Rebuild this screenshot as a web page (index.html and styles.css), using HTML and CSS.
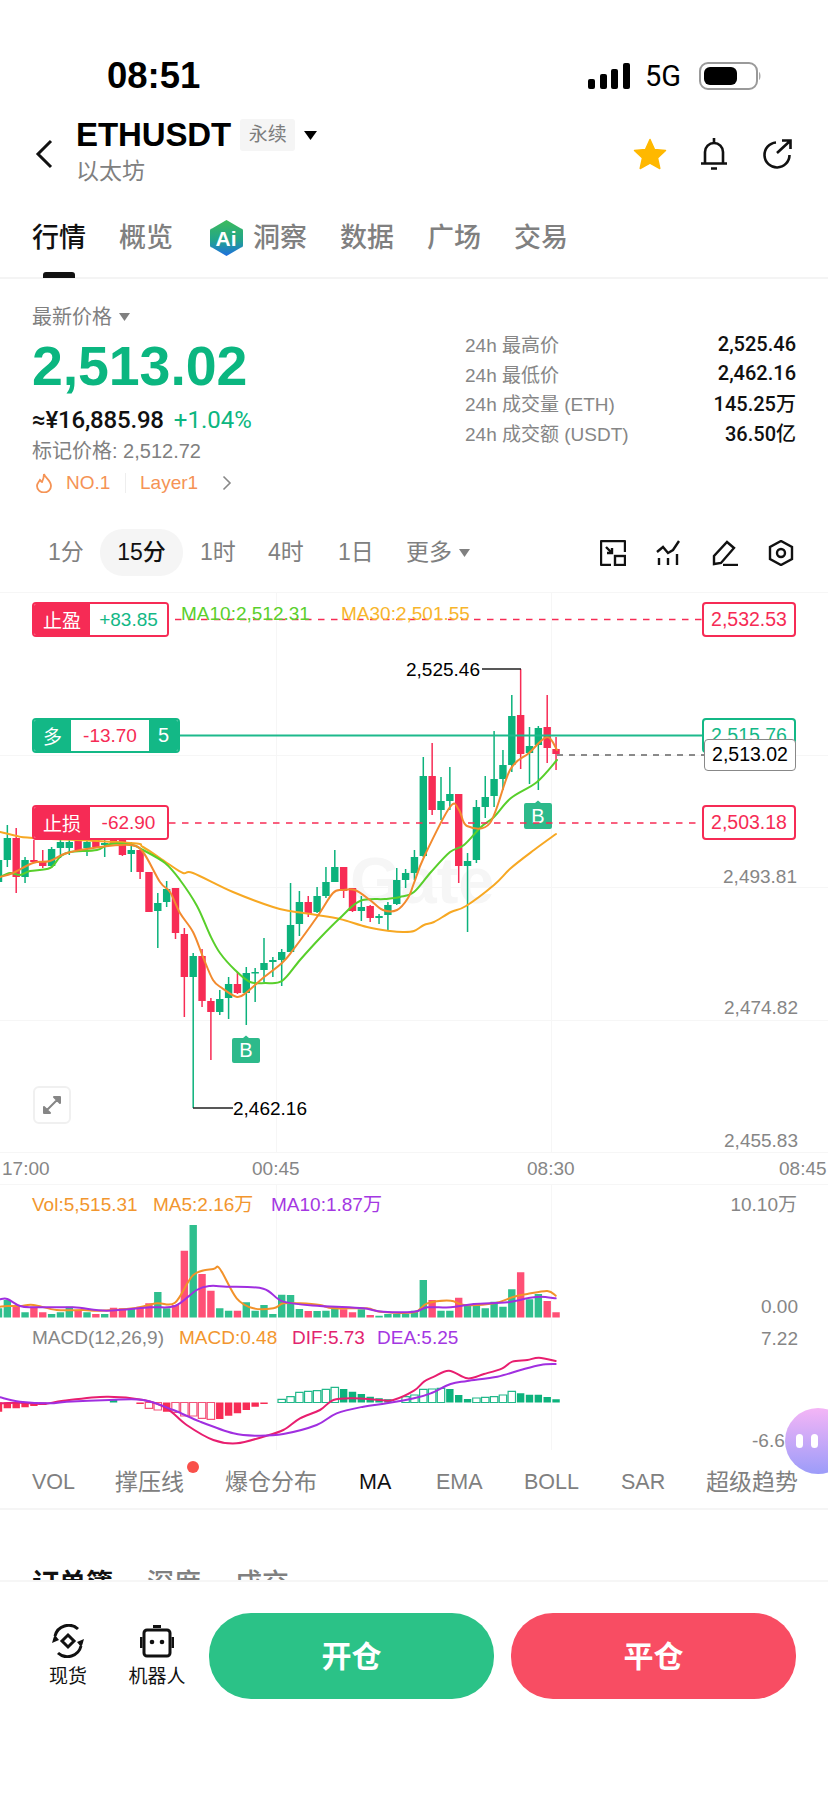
FILE: index.html
```html
<!DOCTYPE html>
<html lang="zh-CN">
<head>
<meta charset="utf-8">
<title>ETHUSDT</title>
<link rel="stylesheet" href="styles.css">
</head>
<body>
<main class="page">
  <div class="status">
    <span class="time">08:51</span>
    <div class="status-right">
      <svg class="signal" viewBox="0 0 42 26"><rect x="0" y="16" width="7" height="10" rx="2"/><rect x="12" y="11" width="7" height="15" rx="2"/><rect x="23" y="6" width="7" height="20" rx="2"/><rect x="35" y="0" width="7" height="26" rx="2"/></svg>
      <span class="net">5G</span>
      <svg class="battery" viewBox="0 0 62 28"><rect x="1" y="1" width="57" height="26" rx="8" fill="#fff" stroke="#9a9a9a" stroke-width="2"/><rect x="5" y="5" width="33" height="18" rx="6" fill="#000"/><path d="M60 10c2 1 2 7 0 8z" fill="#aaa"/></svg>
    </div>
  </div>

  <header class="head">
    <svg class="back" viewBox="0 0 20 30"><path d="M17 2 4 15l13 13" fill="none" stroke="#111" stroke-width="3"/></svg>
    <div class="title-col">
      <div class="title-row">
        <span class="symbol">ETHUSDT</span>
        <span class="badge">永续</span>
        <svg class="caret" viewBox="0 0 13 9"><path d="M0 0h13L6.500 9z"/></svg>
      </div>
      <div class="subname">以太坊</div>
    </div>
    <div class="head-icons">
      <svg class="ic-star" viewBox="0 0 34 32"><path d="M17 1.500 21.500 11.500 32.500 12.500 24.500 20 26.800 30.500 17 25.200 7.200 30.500 9.500 20 1.500 12.500 12.500 11.500z" fill="#FFB800" stroke="#FFB800" stroke-width="1.500" stroke-linejoin="round"/></svg>
      <svg class="ic-bell" viewBox="0 0 28 34"><path d="M1 26.500h26M5 26.500V15a9 9 0 0 1 18 0v11.500" fill="none" stroke="#111" stroke-width="2.600"/><path d="M14 1v5M11 31.500h6" stroke="#111" stroke-width="2.600" fill="none"/></svg>
      <svg class="ic-share" viewBox="0 0 30 30"><path d="M14 3.500A12.500 12.500 0 1 0 27.500 16" fill="none" stroke="#111" stroke-width="2.600"/><path d="M15 14 28 2M20 1.500h8.500V10" fill="none" stroke="#111" stroke-width="2.600"/></svg>
    </div>
  </header>

  <nav class="tabs">
    <span class="tab tab-on">行情</span>
    <span class="tab">概览</span>
    <span class="tab tab-ai">
      <svg class="ai" viewBox="0 0 33 36"><defs><linearGradient id="aig" x1="0" y1="0" x2="0" y2="1"><stop offset="0" stop-color="#3DBB5B"/><stop offset=".55" stop-color="#22A58A"/><stop offset="1" stop-color="#1F6FE0"/></linearGradient></defs><path d="M16.500 0 31 8.500a2 2 0 0 1 2 2v15a2 2 0 0 1-2 2L16.500 36 2 27.500a2 2 0 0 1-2-2v-15a2 2 0 0 1 2-2z" fill="url(#aig)"/><text x="16" y="26" class="ai-text">Ai</text></svg>
      洞察
    </span>
    <span class="tab">数据</span>
    <span class="tab">广场</span>
    <span class="tab">交易</span>
  </nav>

  <section class="summary">
    <div class="sum-left">
      <div class="last-label">最新价格<svg class="caret-s" viewBox="0 0 11 8"><path d="M0 0h11L5.500 8z"/></svg></div>
      <div class="last-price">2,513.02</div>
      <div class="fiat-row"><span class="fiat">≈¥16,885.98</span><span class="pct">+1.04%</span></div>
      <div class="mark">标记价格: 2,512.72</div>
      <div class="rank">
        <svg class="flame" viewBox="0 0 18 20"><path d="M9 1c1 4 7 6 7 12a7 6.500 0 0 1-14 0c0-3 2-4 3-6 1 1 1 2 2 2 1-2 2-5 2-8z" fill="none" stroke="#F59355" stroke-width="1.800"/></svg>
        <span class="rank-no">NO.1</span>
        <span class="rank-sep"></span>
        <span class="rank-cat">Layer1</span>
        <svg class="rank-go" viewBox="0 0 10 16"><path d="M1.500 1.500 8 8l-6.500 6.500" fill="none" stroke="#888" stroke-width="1.600"/></svg>
      </div>
    </div>
    <dl class="stats">
      <div class="stat"><dt>24h 最高价</dt><dd>2,525.46</dd></div>
      <div class="stat"><dt>24h 最低价</dt><dd>2,462.16</dd></div>
      <div class="stat"><dt>24h 成交量 (ETH)</dt><dd>145.25万</dd></div>
      <div class="stat"><dt>24h 成交额 (USDT)</dt><dd>36.50亿</dd></div>
    </dl>
  </section>

  <div class="frames">
    <span class="frame f1">1分</span>
    <span class="frame frame-on">15分</span>
    <span class="frame f2">1时</span>
    <span class="frame f3">4时</span>
    <span class="frame f4">1日</span>
    <span class="frame f5">更多<svg class="caret-s" viewBox="0 0 11 8"><path d="M0 0h11L5.500 8z"/></svg></span>
    <div class="tools">
      <svg viewBox="0 0 26 26"><path d="M11 25H2a1 1 0 0 1-1-1V2a1 1 0 0 1 1-1h22a1 1 0 0 1 1 1v10" class="ts"/><rect x="15" y="16" width="10" height="9" class="ts"/><path d="M6 7l6 6M12 8v5H7" class="ts"/></svg>
      <svg viewBox="0 0 26 26"><path d="M1 12l6-5 5 6 5-3 6-9" class="ts"/><path d="M3 18v7M12 18v7M21 14v11" class="ts"/></svg>
      <svg viewBox="0 0 26 26"><path d="M2 24V16L15 2l7 6L9 23z" class="ts"/><path d="M11 25h15" class="ts"/></svg>
      <svg viewBox="0 0 26 26"><path d="M13 1 24 7v12l-11 6-11-6V7z" class="ts"/><circle cx="13" cy="13" r="4" class="ts"/></svg>
    </div>
  </div>

  <section class="chart">
    <svg class="chart-svg" viewBox="0 590 828 865">
      <path class="grid" d="M0 592.500H828M0 755.500H828M0 887.500H828M0 1020.500H828M0 1152.500H828M0 1184.500H828M276.500 592V1152M276.500 1184V1450M551.500 592V1152M551.500 1184V1450"/>
      <text class="wm" x="350" y="903">Gate</text>

      <path id="candleWickG" class="c-g-w"/>
      <path id="candleWickR" class="c-r-w"/>
      <path id="candleBodyG" class="c-g"/>
      <path id="candleBodyR" class="c-r"/>
      <path id="ma30" class="l l-ma30"/>
      <path id="ma10" class="l l-ma10"/>
      <path id="ma5" class="l l-ma5"/>

      <path class="hl" d="M482 669H521M193 1108H233"/>
      <text class="ax dark" x="406" y="676">2,525.46</text>
      <text class="ax dark" x="233" y="1115">2,462.16</text>

      <g class="bmark">
        <path d="M526 803h9l3-2.500 3 2.500h9a2 2 0 0 1 2 2v22a2 2 0 0 1-2 2h-24a2 2 0 0 1-2-2v-22a2 2 0 0 1 2-2z"/>
        <text x="538" y="823">B</text>
      </g>
      <g class="bmark">
        <path d="M234 1038h9l3-2.500 3 2.500h9a2 2 0 0 1 2 2v21a2 2 0 0 1-2 2h-24a2 2 0 0 1-2-2v-21a2 2 0 0 1 2-2z"/>
        <text x="246" y="1057">B</text>
      </g>

      <path class="dash-r" d="M175 619.500H702M169 823H702"/>
      <path class="solid-g" d="M180 735.500H702"/>
      <path class="dash-k" d="M557 755H704"/>

      <text class="ax ma10t" x="181" y="620">MA10:2,512.31</text>
      <text class="ax ma30t" x="341" y="620">MA30:2,501.55</text>

      <text class="ax grey end" x="797" y="883">2,493.81</text>
      <text class="ax grey end" x="798" y="1014">2,474.82</text>
      <text class="ax grey end" x="798" y="1147">2,455.83</text>
      <text class="ax grey" x="2" y="1175">17:00</text>
      <text class="ax grey" x="252" y="1175">00:45</text>
      <text class="ax grey" x="527" y="1175">08:30</text>
      <text class="ax grey" x="779" y="1175">08:45</text>

      <text class="ax cjk vol-t" x="32" y="1211">Vol:5,515.31</text>
      <text class="ax cjk vol-t" x="153" y="1211">MA5:2.16万</text>
      <text class="ax cjk pur-t" x="271" y="1211">MA10:1.87万</text>
      <text class="ax grey cjk end" x="797" y="1211">10.10万</text>
      <text class="ax grey end" x="798" y="1313">0.00</text>
      <text class="ax grey end" x="798" y="1345">7.22</text>
      <text class="ax grey" x="32" y="1344">MACD(12,26,9)</text>
      <text class="ax vol-t" x="179" y="1344">MACD:0.48</text>
      <text class="ax dif-t" x="292" y="1344">DIF:5.73</text>
      <text class="ax pur-t" x="377" y="1344">DEA:5.25</text>
      <text class="ax grey" x="752" y="1447">-6.61</text>

      <path id="volG" class="v-g"/>
      <path id="volR" class="v-r"/>
      <path id="volMa5" class="l2 l-vol5"/>
      <path id="volMa10" class="l2 l-vol10"/>

      <path id="macdRF" class="m-rf"/>
      <path id="macdRH" class="m-rh"/>
      <path id="macdGF" class="m-gf"/>
      <path id="macdGH" class="m-gh"/>
      <path id="dif" class="l2 l-dif"/>
      <path id="dea" class="l2 l-dea"/>
    </svg>

    <div class="tag tag-tp"><span class="tag-k">止盈</span><span class="tag-v up">+83.85</span></div>
    <div class="tag tag-pos"><span class="tag-k">多</span><span class="tag-v down">-13.70</span><span class="tag-n">5</span></div>
    <div class="tag tag-sl"><span class="tag-k">止损</span><span class="tag-v down">-62.90</span></div>

    <div class="pt pt-tp">2,532.53</div>
    <div class="pt pt-pos">2,515.76</div>
    <div class="pt pt-last">2,513.02</div>
    <div class="pt pt-sl">2,503.18</div>

    <div class="expand"><svg viewBox="0 0 20 20"><path d="M12 2h6v6zM2 12v6h6zM15 5 5 15" class="exp"/></svg></div>
    <div class="assist"><i></i><i></i></div>
  </section>

  <nav class="inds">
    <span class="ind ind-en i1">VOL</span>
    <span class="ind i2">撑压线<b class="dot"></b></span>
    <span class="ind i3">爆仓分布</span>
    <span class="ind ind-en i4 ind-on">MA</span>
    <span class="ind ind-en i5">EMA</span>
    <span class="ind ind-en i6">BOLL</span>
    <span class="ind ind-en i7">SAR</span>
    <span class="ind i8">超级趋势</span>
  </nav>

  <div class="books">
    <span class="book book-on">订单簿</span>
    <span class="book">深度</span>
    <span class="book">成交</span>
  </div>

  <footer class="foot">
    <div class="shortcut s-spot">
      <svg viewBox="0 0 34 34"><path d="M4 12A14 14 0 0 1 27 5M30 22A14 14 0 0 1 7 29" class="sk"/><path d="M1 19c1-3 1-5 3-8l4 5M33 15c-1 3-1 5-3 8l-4-5" class="sk2"/><path d="M17 11l6 6-6 6-6-6z" class="sk"/></svg>
      <span>现货</span>
    </div>
    <div class="shortcut s-bot">
      <svg viewBox="0 0 34 34"><path d="M13 1h8v3h-8z"/><rect x="4" y="6" width="26" height="26" rx="3" class="sk"/><path d="M1 13v11M33 13v11" class="sk"/><circle cx="12" cy="18" r="2.300"/><circle cx="22" cy="18" r="2.300"/></svg>
      <span>机器人</span>
    </div>
    <button class="cta cta-open">开仓</button>
    <button class="cta cta-close">平仓</button>
  </footer>
</main>
<script src="chart.js"></script>
</body>
</html>
```

FILE: styles.css
```css
* { box-sizing: border-box; }
html, body { margin: 0; padding: 0; background: #fff; }
body { font-family: "Liberation Sans", "Noto Sans CJK SC", sans-serif; color: #111; }
.page { width: 828px; height: 1798px; overflow: hidden; position: relative; background: #fff; }

.status { height: 112px; padding: 56px 68px 16px 107px; display: flex; align-items: center; justify-content: space-between; }
.time { font-size: 36.500px; font-weight: 700; line-height: 40px; color: #000; }
.status-right { display: flex; align-items: center; }
.signal { width: 42px; height: 26px; fill: #000; }
.net { font: 400 29px/32px Roboto, sans-serif; margin-left: 15px; color: #000; width: 54px; }
.battery { width: 62px; height: 28px; margin-right: -1px; }

.head { height: 84px; padding: 0 36px 0 34px; display: flex; align-items: center; position: relative; }
.back { width: 20px; height: 30px; margin-right: 22px; }
.title-col { display: flex; flex-direction: column; align-self: flex-start; }
.title-row { display: flex; align-items: center; height: 46px; }
.symbol { font-size: 33px; font-weight: 700; line-height: 40px; letter-spacing: -.1px; color: #000; }
.badge { margin-left: 9px; width: 55px; height: 32px; background: #f5f5f5; border-radius: 3px; font-size: 19px; line-height: 32px; text-align: center; color: #7d7d7d; }
.caret { width: 13px; height: 9px; margin-left: 9px; fill: #000; }
.subname { font-size: 23px; line-height: 32px; color: #808080; margin-top: -3px; }
.head-icons { margin-left: auto; display: flex; align-items: center; }
.ic-star { width: 34px; height: 32px; }
.ic-bell { width: 28px; height: 34px; margin-left: 33px; }
.ic-share { width: 30px; height: 30px; margin-left: 34px; }

.tabs { height: 83px; padding: 2px 0 0 32px; display: flex; align-items: center; border-bottom: 2px solid #f4f4f4; position: relative; }
.tab { font-size: 27px; line-height: 36px; color: #808080; margin-right: 33px; display: flex; align-items: center; font-weight: 500; }
.tab-on { color: #111; }
.tab-on::after { content: ""; position: absolute; left: 43px; bottom: -1px; width: 32px; height: 6px; border-radius: 3px 3px 0 0; background: #111; }
.tab-ai { margin-left: 4px; }
.ai { width: 33px; height: 36px; margin-right: 10px; }
.ai-text { font: 700 21px "Liberation Sans", sans-serif; fill: #fff; text-anchor: middle; }

.summary { height: 250px; padding: 0 32px; display: flex; justify-content: space-between; }
.sum-left { display: flex; flex-direction: column; padding-top: 25px; }
.last-label { font-size: 20px; line-height: 26px; color: #808080; display: flex; align-items: center; }
.caret-s { width: 11px; height: 8px; margin-left: 7px; fill: #808080; }
.last-price { font-size: 55.500px; font-weight: 700; line-height: 62px; color: #0BB680; margin-top: 5px; letter-spacing: -.1px; }
.fiat-row { display: flex; align-items: center; margin-top: 8px; height: 30px; font: 500 24px/30px Roboto, sans-serif; letter-spacing: -.2px; }
.fiat { color: #111; }
.pct { color: #0BB680; margin-left: 10px; font-weight: 400; letter-spacing: 0; }
.mark { font-size: 20px; line-height: 26px; color: #808080; margin-top: 3px; }
.rank { display: flex; align-items: center; height: 32px; margin-top: 3px; font-size: 19px; color: #F59355; }
.flame { width: 18px; height: 20px; margin: 0 13px 0 3px; }
.rank-no { width: 41px; }
.rank-sep { width: 1px; height: 20px; background: #eee; margin: 0 14px 0 18px; }
.rank-cat { width: 58px; }
.rank-go { width: 10px; height: 16px; margin-left: 24px; }

.stats { margin: 0; padding-top: 50px; width: 331px; }
.stat { display: flex; justify-content: space-between; align-items: center; height: 29.500px; }
.stat dt { font-size: 19px; color: #868686; }
.stat dd { margin: 0; font: 500 20px Roboto, "Noto Sans CJK SC", sans-serif; color: #111; }

.frames { height: 61px; padding-right: 34px; display: flex; align-items: flex-start; position: relative; }
.frame { font-size: 23px; line-height: 47px; height: 47px; color: #808080; display: flex; align-items: center; position: absolute; top: 0; }
.f1 { left: 48px; }
.frame-on { left: 100px; width: 83px; justify-content: center; background: #f5f5f5; border-radius: 23px; color: #111; font-weight: 500; }
.f2 { left: 200px; }
.f3 { left: 268px; }
.f4 { left: 338px; }
.f5 { left: 406px; }
.tools { margin-left: auto; display: flex; gap: 30px; padding-top: 11px; }
.tools svg { width: 26px; height: 26px; }
.ts { fill: none; stroke: #111; stroke-width: 2.400; }

.chart { height: 865px; position: relative; }
.chart-svg { position: absolute; left: 0; top: 0; width: 828px; height: 865px; display: block; }
.grid { stroke: #f6f6f6; stroke-width: 1; fill: none; }
.wm { font-size: 65px; font-weight: 700; fill: #f6f6f6; }
.c-g { fill: #0CB27C; } .c-r { fill: #F72C55; }
.c-g-w { stroke: #0CB27C; stroke-width: 1.500; fill: none; }
.c-r-w { stroke: #F72C55; stroke-width: 1.500; fill: none; }
.l { fill: none; stroke-width: 2; stroke-linejoin: round; stroke-linecap: round; }
.l2 { fill: none; stroke-width: 2; stroke-linejoin: round; stroke-linecap: round; }
.l-ma5 { stroke: #F28A2E; }
.l-ma10 { stroke: #58CF2B; }
.l-ma30 { stroke: #F7A823; }
.l-vol5 { stroke: #F2922A; }
.l-vol10 { stroke: #A02FE0; }
.l-dif { stroke: #E81E6F; }
.l-dea { stroke: #A02FE0; }
.hl { stroke: #222; stroke-width: 1.300; fill: none; }
.ax { font-size: 19px; font-family: "Liberation Sans", "Noto Sans CJK SC", sans-serif; }
.dark { fill: #000; }
.grey { fill: #868686; }
.end { text-anchor: end; }
.ma10t { fill: #5ACF2C; }
.ma30t { fill: #F7B52B; }
.vol-t { fill: #F2962E; }
.pur-t { fill: #A437E2; }
.dif-t { fill: #E2246F; }
.bmark path { fill: #2DBA8B; }
.bmark text { font-size: 20px; fill: #fff; text-anchor: middle; }
.dash-r { stroke: #F72C55; stroke-width: 1.500; stroke-dasharray: 6.500 6.500; fill: none; }
.solid-g { stroke: #1DB98C; stroke-width: 2; fill: none; }
.dash-k { stroke: #666; stroke-width: 1.300; stroke-dasharray: 6 6; fill: none; }
.v-g { fill: #2FBF8E; } .v-r { fill: #FF5076; }
.m-rf { fill: #F72C55; } .m-gf { fill: #0CB27C; }
.m-rh { fill: #fff; stroke: #F4537A; stroke-width: 1.200; }
.m-gh { fill: #fff; stroke: #22B88A; stroke-width: 1.200; }

.tag { position: absolute; left: 32px; height: 35px; border-radius: 4px; background: #fff; display: flex; align-items: stretch; overflow: hidden; font-size: 19px; border: 2px solid #F62B55; }
.tag-k { background: #F62B55; color: #fff; display: flex; align-items: center; justify-content: center; width: 56px; }
.tag-v { flex: 1; display: flex; align-items: center; justify-content: center; background: #fff; }
.tag-tp { top: 12px; width: 137px; }
.tag-sl { top: 215px; width: 137px; }
.tag-pos { top: 128px; width: 148px; border-color: #13B886; }
.tag-pos .tag-k { background: #13B886; width: 37px; }
.tag-n { background: #13B886; color: #fff; width: 29px; display: flex; align-items: center; justify-content: center; font-size: 20px; }
.up { color: #13B886; } .down { color: #F62B55; }

.pt { position: absolute; right: 32px; width: 94px; height: 35px; border: 2px solid #F62B55; border-radius: 4px; background: #fff; font-size: 19.500px; line-height: 31px; text-align: center; color: #F62B55; }
.pt-tp { top: 12px; }
.pt-sl { top: 215px; }
.pt-pos { top: 128px; border-color: #13B886; color: #13B886; background: transparent; }
.pt-last { top: 149px; width: 92px; height: 32px; border: 1.500px solid #888; line-height: 29px; color: #000; border-radius: 4px; }

.exp { fill: #868686; stroke: #868686; stroke-width: 2; stroke-linejoin: round; }
.expand { position: absolute; left: 33px; top: 496px; width: 38px; height: 38px; border: 2px solid #f0f0f0; border-radius: 6px; background: #fff; display: flex; align-items: center; justify-content: center; }
.expand svg { width: 20px; height: 20px; }
.assist { position: absolute; z-index: 2; left: 785px; top: 818px; width: 66px; height: 66px; border-radius: 50%; background: linear-gradient(#F4B5F6, #9C9CF9); display: flex; gap: 8px; padding-left: 11px; align-items: center; }
.assist i { width: 7px; height: 14px; border-radius: 3.500px; background: #fff; }

.inds { height: 55px; border-bottom: 2px solid #f5f5f5; position: relative; }
.ind { position: absolute; top: 11px; font-size: 23px; line-height: 32px; color: #808080; }
.ind-en { font-size: 21.500px; }
.i1 { left: 32px; } .i2 { left: 115px; } .i3 { left: 225px; } .i4 { left: 359px; }
.i5 { left: 436px; } .i6 { left: 524px; } .i7 { left: 621px; } .i8 { left: 706px; }
.ind-on { color: #111; }
.dot { position: absolute; right: -15px; top: -5px; width: 12px; height: 12px; border-radius: 50%; background: #F9504A; }

.books { height: 70px; padding: 56px 0 0 32px; display: flex; gap: 34px; overflow: hidden; }
.book { font-size: 27px; line-height: 36px; color: #808080; font-weight: 500; }
.book-on { color: #111; font-weight: 700; }

.foot { height: 218px; border-top: 2px solid #f6f6f6; background: #fff; padding-top: 31px; display: flex; align-items: flex-start; position: relative; padding-left: 209px; gap: 17px; }
.shortcut { position: absolute; top: 42px; display: flex; flex-direction: column; align-items: center; font-size: 19px; line-height: 26px; color: #111; }
.shortcut svg { width: 34px; height: 34px; margin-bottom: 6px; fill: #111; }
.sk { fill: none; stroke: #111; stroke-width: 3; }
.sk2 { fill: #111; }
.s-spot { left: 49px; width: 38px; }
.s-bot { left: 127px; width: 60px; }
.cta { width: 285px; height: 86px; border: 0; border-radius: 42px; color: #fff; font: 700 30px "Noto Sans CJK SC", sans-serif; padding: 0 0 5px; }
.cta-open { background: #2BC287; }
.cta-close { background: #F84D63; }
```

FILE: chart.js
```js
// Candles: [green?, wickTop, bodyTop, bodyBottom, wickBottom], from slot -1 to 62.
var candles = [
[1,850,860,882,890],[1,825,838,860,867],[0,828,838,877,893],[1,857,860,877,883],[0,840,860,862,862],[0,850,861,866,868],
[1,847,849,866,868],[1,838,842,848,858],[1,838,842,848,855],[0,838,838,850,852],[1,838,842,848,856],[0,838,838,847,848],
[1,840,843,845,857],[0,838,838,843,844],[0,838,838,855,856],[1,842,850,854,872],[0,850,850,872,879],[0,872,872,912,912],
[1,893,903,911,948],[1,881,889,902,907],[0,888,888,933,939],[0,928,934,977,1017],[1,953,956,977,1108],[0,949,956,1001,1007],
[0,998,1001,1012,1060],[1,990,999,1012,1015],[1,977,984,998,1019],[0,972,984,993,994],[1,967,973,993,1025],[1,968,972,973.500,1002],
[1,938,963,970,982],[1,957,960,962,977],[1,949,952,960,986],[1,883,925,952,952],[1,891,902,924,936],[0,896,902,914,917],
[1,887,896,912,913],[1,867,882,896,898],[1,850,867,882,882],[0,867,867,891,898],[0,888,888,911,912],[1,896,907,911,921],
[0,905,906,918,922],[1,914,916,918,924],[1,902,905,915,931],[1,868,880,904,905],[1,869,873,880,888],[1,850,857,873,880],
[1,757,776,856,857],[0,743,776,810,815],[1,777,801,810,820],[1,767,794,801,810],[0,794,794,866,883],[1,853,861,866,932],
[1,800,807,860,863],[1,776,797,807,818],[1,731,779,796,807],[1,750,765,779,790],[1,695,716,765,772],[0,669,715,754,769],
[1,727,746,753,784],[1,726,728,745,790],[0,695,727,748,763],[0,737,749,754,770]
];
function cx(i) { return 7.350 + 8.850 * (i - 1); }
// Smooth curve through the sampled points (Catmull-Rom to Bezier).
function line(p) {
  var d = "M" + p[0][0] + " " + p[0][1];
  for (var i = 0; i < p.length - 1; i++) {
    var a = p[i - 1] || p[i], b = p[i], c = p[i + 1], e = p[i + 2] || c;
    d += "C" + (b[0] + (c[0] - a[0]) / 6) + " " + (b[1] + (c[1] - a[1]) / 6) + " " +
         (c[0] - (e[0] - b[0]) / 6) + " " + (c[1] - (e[1] - b[1]) / 6) + " " + c[0] + " " + c[1];
  }
  return d;
}
function set(id, d) { document.getElementById(id).setAttribute("d", d); }
function box(x, t, b, w) { return "M" + (x - w / 2) + " " + t + "h" + w + "v" + (b - t) + "h" + (-w) + "z"; }

var wg = "", wr = "", bg = "", br = "";
candles.forEach(function (c, i) {
  var x = cx(i), w = "M" + x + " " + c[1] + "V" + c[4], b = box(x, c[2], c[3], 7.400);
  if (c[0]) { wg += w; bg += b; } else { wr += w; br += b; }
});
set("candleWickG", wg); set("candleWickR", wr); set("candleBodyG", bg); set("candleBodyR", br);

set("ma5", line([[0,877],[13,873],[33,863],[50,861],[67,853],[100,847],[130,845],[143,852],[160,882],[170,892],[180,913],[193,932],[203,957],[213,980],[222,988],[237,997],[247,992],[263,978],[282,963],[293,950],[317,917],[333,893],[343,890],[355,890],[370,900],[383,910],[397,910],[408,898],[414,883],[424,857],[450,807],[459,810],[467,826],[490,823],[510,770],[529,753],[547,737],[557,750]]));
set("ma10", line([[0,877],[10,873],[20,875],[30,871],[50,868],[60,857],[70,852],[97,850],[110,844],[132,845],[143,850],[165,863],[180,880],[197,906],[210,935],[220,953],[235,970],[250,982],[265,983],[282,981],[300,960],[320,938],[340,918],[360,901],[385,899],[400,897],[414,892],[431,872],[450,852],[464,845],[481,827],[494,817],[511,798],[537,782],[557,760]]));
set("ma30", line([[0,832],[17,836],[33,838],[130,843],[143,847],[167,863],[183,873],[193,873],[233,892],[273,907],[290,911],[317,915],[340,919],[367,927],[390,931],[403,932],[414,931],[424,925],[434,922],[451,912],[466,906],[494,885],[511,868],[534,850],[556,834]]));

// Lower panes are read in 3x coordinates: first the left half, then the right half.
function pane(left, right) {
  return left.map(function (p) { return [p[0] / 3, 1180 + p[1] / 3]; })
    .concat(right.map(function (p) { return [414 + p[0] / 3, 1180 + p[1] / 3]; }));
}
var vols = [385,360,375,397,380,397,402,397,380,390,397,402,402,383,385,385,380,370,336,385,375,212,135,282,332,385,392,392,367,392,375,402,344,345,387,393,393,392,378,388,397,388,405,407,402,402,402,392,300,360,392,392,353,378,370,385,365,380,328,277,358,342,363,397];
var vg = "", vr = "";
vols.forEach(function (v, i) {
  var b = box(cx(i), 1180 + v / 3, 1317.500, 7.400);
  if (candles[i][0]) vg += b; else vr += b;
});
set("volG", vg); set("volR", vr);
set("volMa5", line(pane([[0,380],[22,378],[60,378],[100,375],[170,390],[250,390],[300,392],[400,385],[470,370],[525,368],[580,285],[640,267],[660,267],[710,355],[760,385],[820,385],[850,370],[900,370],[960,375],[1000,385],[1100,385],[1140,395],[1242,397]],[[40,370],[110,362],[150,375],[240,370],[300,350],[340,342],[400,333],[425,347]])));
set("volMa10", line(pane([[0,358],[22,357],[60,378],[100,382],[220,382],[320,392],[450,382],[525,378],[590,330],[630,318],[680,320],[790,326],[850,365],[960,378],[1010,380],[1090,385],[1150,395],[1242,395]],[[40,382],[110,382],[180,372],[280,367],[340,355],[380,350],[425,355]])));
set("dif", line(pane([[0,670],[60,668],[130,672],[190,662],[320,650],[430,660],[500,685],[560,735],[640,780],[710,790],[790,770],[850,750],[900,715],[960,690],[1000,660],[1060,655],[1140,660],[1180,660],[1242,632]],[[30,605],[60,590],[105,572],[160,595],[210,582],[265,565],[295,545],[340,540],[375,533],[425,543]])));
set("dea", line(pane([[0,652],[60,665],[150,670],[200,665],[330,660],[430,660],[520,690],[600,725],[700,760],[770,767],[850,762],[950,735],[1010,700],[1090,680],[1160,670],[1242,655]],[[50,640],[110,612],[160,603],[250,590],[320,570],[380,555],[425,552]])));

// MACD bars: [slot, 3x y of far end, kind] — kinds: rf, rh, gf, gh
var macd = [[0,695,"rf"],[1,685,"rf"],[2,685,"rf"],[3,682,"rf"],[4,678,"rf"],[5,675,"rf"],[13,658,"gf"],[16,672,"rf"],[17,685,"rh"],[18,690,"rh"],[19,695,"rf"],[20,697,"rh"],[21,708,"rh"],[22,708,"rh"],[23,715,"rh"],[24,718,"rh"],[25,717,"rf"],[26,707,"rf"],[27,700,"rf"],[28,690,"rf"],[29,680,"rf"],[30,672,"rf"],[32,658,"gh"],[33,650,"gh"],[34,637,"gh"],[35,634,"gh"],[36,632,"gh"],[37,628,"gh"],[38,622,"gh"],[39,627,"gf"],[40,635,"gf"],[41,642,"gf"],[42,650,"gf"],[43,655,"gf"],[44,658,"gf"],[46,650,"gh"],[47,645,"gh"],[48,628,"gh"],[49,627,"gh"],[50,625,"gh"],[51,627,"gf"],[52,645,"gf"],[53,657,"gf"],[54,654,"gh"],[55,652,"gh"],[56,650,"gh"],[57,645,"gh"],[58,634,"gh"],[59,640,"gf"],[60,644,"gf"],[61,644,"gf"],[62,651,"gf"],[63,658,"gf"]];
var out = { rf: "", rh: "", gf: "", gh: "" };
macd.forEach(function (m) {
  var y = 1180 + m[1] / 3, t = Math.min(y, 1402.500), b = Math.max(y, 1402.500);
  out[m[2]] += box(cx(m[0]), t, b, 7.400);
});
set("macdRF", out.rf); set("macdRH", out.rh); set("macdGF", out.gf); set("macdGH", out.gh);
```
